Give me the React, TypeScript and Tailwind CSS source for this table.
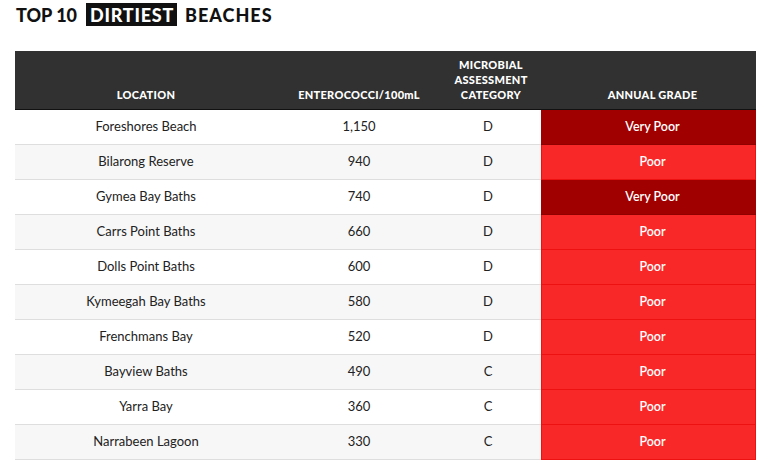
import React from "react";

type Row = { loc: string; val: string; cat: string; grade: "Very Poor" | "Poor" };

const rows: Row[] = [
  { loc: "Foreshores Beach", val: "1,150", cat: "D", grade: "Very Poor" },
  { loc: "Bilarong Reserve", val: "940", cat: "D", grade: "Poor" },
  { loc: "Gymea Bay Baths", val: "740", cat: "D", grade: "Very Poor" },
  { loc: "Carrs Point Baths", val: "660", cat: "D", grade: "Poor" },
  { loc: "Dolls Point Baths", val: "600", cat: "D", grade: "Poor" },
  { loc: "Kymeegah Bay Baths", val: "580", cat: "D", grade: "Poor" },
  { loc: "Frenchmans Bay", val: "520", cat: "D", grade: "Poor" },
  { loc: "Bayview Baths", val: "490", cat: "C", grade: "Poor" },
  { loc: "Yarra Bay", val: "360", cat: "C", grade: "Poor" },
  { loc: "Narrabeen Lagoon", val: "330", cat: "C", grade: "Poor" },
];

export default function App() {
  return (
    <div className="w-[763px] h-[471px] bg-white overflow-hidden" style={{ fontFamily: "Lato, 'Open Sans', sans-serif" }}>
      <div className="pl-[16px] pt-[5px] flex items-center h-[24px] text-[18px] leading-none font-black text-[#111]">
        <span className="tracking-[0px]">TOP 10</span>
        <span className="ml-[9px] bg-[#111] text-white pl-[4px] pr-[3px] h-[23px] flex items-center tracking-[0.75px]">DIRTIEST</span>
        <span className="ml-[8px] tracking-[1px]">BEACHES</span>
      </div>
      <div className="ml-[15px] mt-[27px] w-[741px]">
        <div className="grid grid-cols-[262px_164px_100px_215px] bg-[#313131] h-[59px] text-white text-[11px] font-black leading-[15px] tracking-[0.3px] border-b border-[#111]">
          <div className="flex items-end justify-center pb-[7px]">LOCATION</div>
          <div className="flex items-end justify-center pb-[7px]">ENTEROCOCCI/100mL</div>
          <div className="flex items-end justify-center text-center pb-[7px]">MICROBIAL<br />ASSESSMENT<br />CATEGORY</div>
          <div className="flex items-end justify-center pb-[7px] pl-[8px]">ANNUAL GRADE</div>
        </div>
        {rows.map((r, i) => (
          <div
            key={r.loc}
            className={`grid grid-cols-[262px_164px_100px_215px] h-[35px] text-[13px] text-[#222] ${i % 2 === 0 ? "bg-white" : "bg-[#f7f7f7]"}`}
          >
            <div className="flex items-center justify-center border-b border-[#dedede]">{r.loc}</div>
            <div className="flex items-center justify-center border-b border-[#dedede]">{r.val}</div>
            <div className="flex items-center justify-center border-b border-[#dedede] pr-[6px]">{r.cat}</div>
            <div
              className={`flex items-center justify-center pl-[8px] text-[12.5px] font-semibold text-white ${
                r.grade === "Very Poor" ? "bg-[#a10000] border-b border-[#8f0000]" : "bg-[#f92828] border border-t-0 border-[#ee1111]"
              }`}
            >
              {r.grade}
            </div>
          </div>
        ))}
      </div>
    </div>
  );
}
